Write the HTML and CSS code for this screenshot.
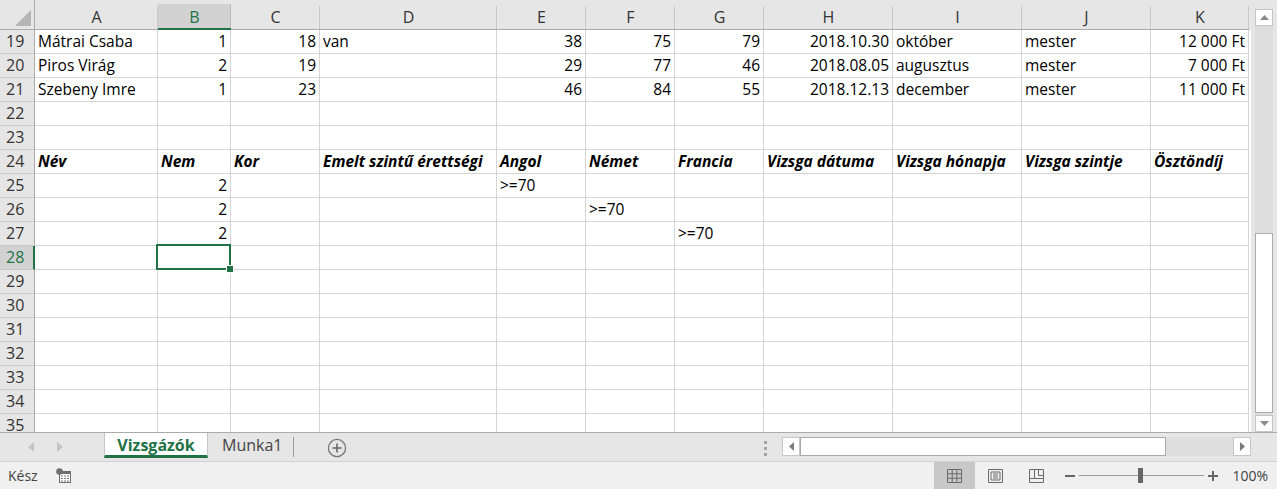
FILE: index.html
```html
<!DOCTYPE html>
<html lang="hu">
<head>
  <meta charset="UTF-8" />
  <title>Vizsgázók - Excel</title>
  <link rel="stylesheet" href="styles.css">
</head>
<body>
<div class="app">

  <div class="main">
    <div class="sheet">
      <!-- column headers -->
      <div class="corner"><svg width="18" height="18" viewBox="0 0 18 18"><polygon points="16,1 16,17 0,17" fill="#b5b5b5"/></svg></div>
      <div class="ch">A</div><div class="ch sel-col">B</div><div class="ch">C</div><div class="ch">D</div><div class="ch">E</div><div class="ch">F</div><div class="ch">G</div><div class="ch">H</div><div class="ch">I</div><div class="ch">J</div><div class="ch">K</div>

      <div class="rh">19</div><div class="c">Mátrai Csaba</div><div class="c n">1</div><div class="c n">18</div><div class="c">van</div><div class="c n">38</div><div class="c n">75</div><div class="c n">79</div><div class="c n">2018.10.30</div><div class="c">október</div><div class="c">mester</div><div class="c n">12 000 Ft</div>
      <div class="rh">20</div><div class="c">Piros Virág</div><div class="c n">2</div><div class="c n">19</div><div class="c"></div><div class="c n">29</div><div class="c n">77</div><div class="c n">46</div><div class="c n">2018.08.05</div><div class="c">augusztus</div><div class="c">mester</div><div class="c n">7 000 Ft</div>
      <div class="rh">21</div><div class="c">Szebeny Imre</div><div class="c n">1</div><div class="c n">23</div><div class="c"></div><div class="c n">46</div><div class="c n">84</div><div class="c n">55</div><div class="c n">2018.12.13</div><div class="c">december</div><div class="c">mester</div><div class="c n">11 000 Ft</div>
      <div class="rh">22</div><div class="c"></div><div class="c"></div><div class="c"></div><div class="c"></div><div class="c"></div><div class="c"></div><div class="c"></div><div class="c"></div><div class="c"></div><div class="c"></div><div class="c"></div>
      <div class="rh">23</div><div class="c"></div><div class="c"></div><div class="c"></div><div class="c"></div><div class="c"></div><div class="c"></div><div class="c"></div><div class="c"></div><div class="c"></div><div class="c"></div><div class="c"></div>
      <div class="rh">24</div><div class="c h">Név</div><div class="c h">Nem</div><div class="c h">Kor</div><div class="c h">Emelt szintű érettségi</div><div class="c h">Angol</div><div class="c h">Német</div><div class="c h">Francia</div><div class="c h">Vizsga dátuma</div><div class="c h">Vizsga hónapja</div><div class="c h">Vizsga szintje</div><div class="c h">Ösztöndíj</div>
      <div class="rh">25</div><div class="c"></div><div class="c n">2</div><div class="c"></div><div class="c"></div><div class="c">&gt;=70</div><div class="c"></div><div class="c"></div><div class="c"></div><div class="c"></div><div class="c"></div><div class="c"></div>
      <div class="rh">26</div><div class="c"></div><div class="c n">2</div><div class="c"></div><div class="c"></div><div class="c"></div><div class="c">&gt;=70</div><div class="c"></div><div class="c"></div><div class="c"></div><div class="c"></div><div class="c"></div>
      <div class="rh">27</div><div class="c"></div><div class="c n">2</div><div class="c"></div><div class="c"></div><div class="c"></div><div class="c"></div><div class="c">&gt;=70</div><div class="c"></div><div class="c"></div><div class="c"></div><div class="c"></div>
      <div class="rh sel-row">28</div><div class="c"></div><div class="c active"></div><div class="c"></div><div class="c"></div><div class="c"></div><div class="c"></div><div class="c"></div><div class="c"></div><div class="c"></div><div class="c"></div><div class="c"></div>
      <div class="rh">29</div><div class="c"></div><div class="c"></div><div class="c"></div><div class="c"></div><div class="c"></div><div class="c"></div><div class="c"></div><div class="c"></div><div class="c"></div><div class="c"></div><div class="c"></div>
      <div class="rh">30</div><div class="c"></div><div class="c"></div><div class="c"></div><div class="c"></div><div class="c"></div><div class="c"></div><div class="c"></div><div class="c"></div><div class="c"></div><div class="c"></div><div class="c"></div>
      <div class="rh">31</div><div class="c"></div><div class="c"></div><div class="c"></div><div class="c"></div><div class="c"></div><div class="c"></div><div class="c"></div><div class="c"></div><div class="c"></div><div class="c"></div><div class="c"></div>
      <div class="rh">32</div><div class="c"></div><div class="c"></div><div class="c"></div><div class="c"></div><div class="c"></div><div class="c"></div><div class="c"></div><div class="c"></div><div class="c"></div><div class="c"></div><div class="c"></div>
      <div class="rh">33</div><div class="c"></div><div class="c"></div><div class="c"></div><div class="c"></div><div class="c"></div><div class="c"></div><div class="c"></div><div class="c"></div><div class="c"></div><div class="c"></div><div class="c"></div>
      <div class="rh">34</div><div class="c"></div><div class="c"></div><div class="c"></div><div class="c"></div><div class="c"></div><div class="c"></div><div class="c"></div><div class="c"></div><div class="c"></div><div class="c"></div><div class="c"></div>
      <div class="rh">35</div><div class="c"></div><div class="c"></div><div class="c"></div><div class="c"></div><div class="c"></div><div class="c"></div><div class="c"></div><div class="c"></div><div class="c"></div><div class="c"></div><div class="c"></div>
    </div>

    <!-- vertical scrollbar -->
    <div class="vscroll">
      <div class="sbtn"><svg width="9" height="5" viewBox="0 0 9 5"><polygon points="0,5 9,5 4.5,0" fill="#8a8a8a"/></svg></div>
      <div class="vtrack"><div class="vthumb"></div></div>
      <div class="sbtn"><svg width="9" height="5" viewBox="0 0 9 5"><polygon points="0,0 9,0 4.5,5" fill="#8a8a8a"/></svg></div>
    </div>
  </div>

  <!-- sheet tabs -->
  <div class="tabbar">
    <div class="tab-nav">
      <svg width="6" height="10" viewBox="0 0 6 10"><polygon points="6,0 6,10 0,5" fill="#c4c4c4"/></svg>
      <svg width="6" height="10" viewBox="0 0 6 10"><polygon points="0,0 0,10 6,5" fill="#c4c4c4"/></svg>
    </div>
    <div class="tab active-tab">Vizsgázók</div>
    <div class="tab">Munka1</div>
    <div class="tab-sep"></div>
    <div class="add-sheet"><svg width="20" height="20" viewBox="0 0 20 20"><circle cx="10" cy="10" r="8.6" fill="none" stroke="#777" stroke-width="1.3"/><path d="M10 5.5v9M5.5 10h9" stroke="#666" stroke-width="1.6"/></svg></div>
    <div class="grip"><span></span><span></span><span></span></div>
    <div class="hscroll">
      <div class="sbtn h"><svg width="5" height="9" viewBox="0 0 5 9"><polygon points="5,0 5,9 0,4.5" fill="#7a7a7a"/></svg></div>
      <div class="hthumb"></div>
      <div class="htrack"></div>
      <div class="sbtn h"><svg width="5" height="9" viewBox="0 0 5 9"><polygon points="0,0 0,9 5,4.5" fill="#7a7a7a"/></svg></div>
    </div>
  </div>

  <!-- status bar -->
  <div class="statusbar">
    <span class="ready">Kész</span>
    <span class="macro-icon"><svg width="16" height="16" viewBox="0 0 16 16"><rect x="3.5" y="3.5" width="11" height="11" fill="#fff" stroke="#6f6f6f"/><rect x="3" y="3" width="12" height="3" fill="#6f6f6f"/><circle cx="3.5" cy="3.5" r="3.3" fill="#6f6f6f"/><path d="M5 8h2M8 8h2M11 8h2M5 10.5h2M8 10.5h2M11 10.5h2M5 13h2M8 13h2M11 13h2" stroke="#7a7a7a" stroke-width="1"/></svg></span>
    <div class="views">
      <div class="vbtn on"><svg width="15" height="14" viewBox="0 0 15 14"><path d="M0.5 0.5h14v13h-14zM5.2 0.5v13M9.8 0.5v13M0.5 4.8h14M0.5 9.2h14" fill="none" stroke="#6a6a6a"/></svg></div>
      <div class="vbtn"><svg width="15" height="14" viewBox="0 0 15 14"><path d="M0.5 0.5h14v13h-14zM3 3h9v8h-9zM5 5h5M5 7h5M5 9h5" fill="none" stroke="#6a6a6a"/></svg></div>
      <div class="vbtn"><svg width="15" height="14" viewBox="0 0 15 14"><path d="M0.5 0.5h14v13h-14zM0.5 9.5h14M5.5 0.5v9M9.5 0.5v6h5" fill="none" stroke="#6a6a6a"/></svg></div>
    </div>
    <div class="zoom">
      <span class="zminus"></span>
      <div class="zslider"><span class="zknob"></span></div>
      <span class="zplus"></span>
      <span class="zval">100%</span>
    </div>
  </div>

</div>
</body>
</html>
```

FILE: styles.css
```css
*{box-sizing:border-box}

body {
  margin:0;
  font-family:'Open Sans','Lato',sans-serif;
  color:#000;
  background:#fff;
}

.app {
  width:1277px;
  height:489px;
  display:flex;
  flex-direction:column;
  overflow:hidden;
}

/* ---------- grid ---------- */
.main {
  display:flex;
  height:433px;
  border-bottom:1px solid #ababab;
}

.sheet {
  width:1251px;
  overflow:hidden;
  display:grid;
  grid-template-columns:35px 123px 73px 89px 177px 89px 89px 89px 129px 129px 129px 98px;
  grid-auto-rows:24px;
  grid-template-rows:30px;
  align-content:start;
  background:linear-gradient(#e6e6e6,#e6e6e6) top/100% 30px no-repeat,#fff;
}

.corner {
  background:#e6e6e6;
  border-right:1px solid #ababab;
  border-bottom:1px solid #ababab;
  display:flex;
  align-items:flex-end;
  justify-content:flex-end;
  padding:0 1px 2px 0;
}

.ch {
  background:linear-gradient(#c9c9c9,#c9c9c9) right bottom/1px 23px no-repeat,#e6e6e6;
  border-bottom:1px solid #ababab;
  font-size:16px;
  color:#333;
  text-align:center;
  padding-top:6px;
  line-height:23px;
}

.ch.sel-col {
  background:linear-gradient(#b8b8b8,#b8b8b8) right bottom/1px 23px no-repeat,linear-gradient(#d2d2d2,#d2d2d2) bottom/100% 24px no-repeat,#e6e6e6;
  border-bottom:2px solid #217346;
  color:#217346;
  line-height:22px;
}

.rh {
  background:#e6e6e6;
  border-right:1px solid #ababab;
  border-bottom:1px solid #c9c9c9;
  font-size:16px;
  color:#333;
  line-height:23px;
  padding-left:6px;
}

.rh.sel-row {
  background:#d2d2d2;
  border-right:2px solid #217346;
  color:#217346;
}

.c {
  border-right:1px solid #d4d4d4;
  border-bottom:1px solid #d4d4d4;
  font-size:15.5px;
  line-height:23px;
  padding:0 3px;
  white-space:nowrap;
  overflow:hidden;
}

.c.n {text-align:right}
.c.h {font-weight:700;font-style:italic}

.c.active {
  position:relative;
  overflow:visible;
}

.c.active::before {
  content:'';
  position:absolute;
  left:-2px;top:-2px;right:-1px;bottom:-1px;
  border:2px solid #217346;
}

.c.active::after {
  content:'';
  position:absolute;
  right:-4px;bottom:-4px;
  width:6px;height:6px;
  background:#217346;
  border:1px solid #fff;
}

/* ---------- scrollbars ---------- */
.vscroll {
  flex:1;
  background:#e6e6e6;
  display:flex;
  flex-direction:column;
  padding:9px 4px 0 4px;
}

.sbtn {
  height:17px;
  background:#fff;
  border:1px solid #c6c6c6;
  display:flex;
  align-items:center;
  justify-content:center;
}

.vtrack {
  flex:1;
  padding:207px 0 2px;
  background:#dedede;
}

.vthumb {
  height:180px;
  background:#fff;
  border:1px solid #ababab;
}

/* ---------- sheet tabs ---------- */
.tabbar {
  height:28px;
  background:#e6e6e6;
  display:flex;
  align-items:flex-start;
}

.tab-nav {
  display:flex;
  gap:23px;
  margin:9px 0 0 28px;
}

.tab {
  font-size:16px;
  color:#444;
  height:25px;
  line-height:24px;
  padding:0 11px 0 14px;
}

.active-tab {
  margin-left:41px;
  width:104px;
  text-align:center;
  padding:0;
  background:#fff;
  color:#217346;
  font-weight:700;
  border-left:1px solid #c6c6c6;
  border-right:1px solid #c6c6c6;
  border-bottom:3px solid #217346;
}

.tab-sep {
  width:1px;
  height:20px;
  margin-top:4px;
  background:#9a9a9a;
}

.add-sheet {margin:5px 0 0 33px}

.grip {
  display:flex;
  flex-direction:column;
  gap:3px;
  margin:8px 0 0 auto;
}

.grip span {
  width:3px;height:3px;
  background:#a5a5a5;
}

.hscroll {
  display:flex;
  margin:4px 26px 0 15px;
  height:19px;
}

.sbtn.h {width:18px;height:19px}

.hthumb {
  width:366px;
  background:#fff;
  border:1px solid #ababab;
}

.htrack {
  width:67px;
  background:#dedede;
}

/* ---------- status bar ---------- */
.statusbar {
  flex:1;
  background:#f0f0f0;
  border-top:1px solid #d2d2d2;
  display:flex;
  align-items:center;
  font-size:14px;
  color:#444;
}

.ready {margin-left:8px}
.macro-icon {margin-left:18px;display:flex}

.views {
  margin-left:auto;
  display:flex;
  height:100%;
}

.vbtn {
  width:41px;
  display:flex;
  align-items:center;
  justify-content:center;
}

.vbtn.on {background:#c8c8c8}

.zoom {
  display:flex;
  align-items:center;
  margin-left:8px;
  margin-right:9px;
}

.zminus {
  width:10px;height:2px;
  background:#666;
}

.zslider {
  width:125px;
  height:1px;
  background:#9b9b9b;
  margin:0 4px;
  position:relative;
}

.zknob {
  position:absolute;
  left:59px;top:-7px;
  width:5px;height:15px;
  background:#666;
}

.zplus {
  width:10px;height:10px;
  background:linear-gradient(#666,#666) center/10px 2px no-repeat,linear-gradient(#666,#666) center/2px 10px no-repeat;
}

.zval {margin-left:14px}
```
